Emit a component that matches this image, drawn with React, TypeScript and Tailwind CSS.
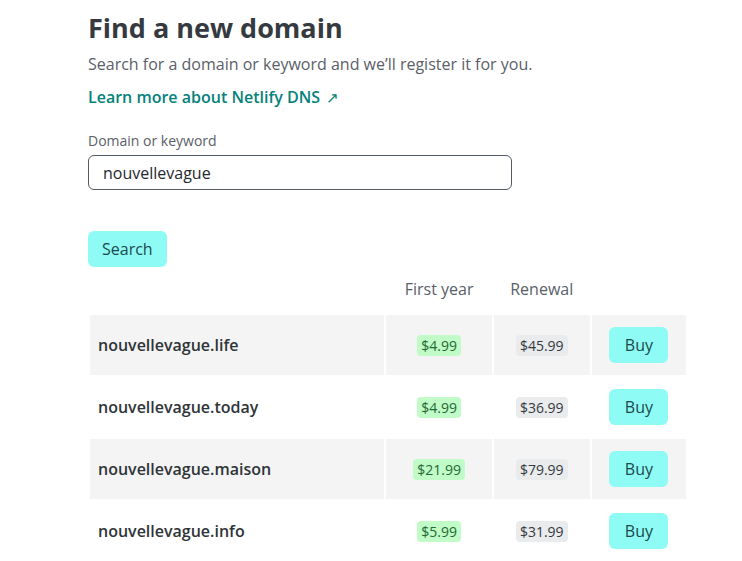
const rows = [
  { name: "nouvellevague.life", first: "$4.99", renewal: "$45.99" },
  { name: "nouvellevague.today", first: "$4.99", renewal: "$36.99" },
  { name: "nouvellevague.maison", first: "$21.99", renewal: "$79.99" },
  { name: "nouvellevague.info", first: "$5.99", renewal: "$31.99" },
];

export default function App() {
  return (
    <div className="min-h-screen bg-white font-['Open_Sans',sans-serif] text-[#343a40]">
      <main className="pl-[88px] pt-[10px] w-[690px]">
        <h1 className="text-[27px] font-bold leading-[36px]">Find a new domain</h1>
        <p className="mt-[6px] text-[16px] leading-[24px] text-[#5a6068]">
          Search for a domain or keyword and we’ll register it for you.
        </p>
        <a href="#" className="mt-[9px] inline-flex items-center gap-[6px] text-[16px] font-semibold text-[#04827b]">
          Learn more about Netlify DNS
          <span className="text-[15px] font-normal">↗</span>
        </a>

        {/* SEARCH FORM */}
        <div className="mt-[22px]">
          <label className="block text-[14px] leading-[20px] text-[#5a6068]">Domain or keyword</label>
          <input
            className="mt-[4px] w-[424px] h-[35px] border border-[#545b63] rounded-[6px] px-[14px] text-[16px] text-[#24292e] outline-none"
            defaultValue="nouvellevague"
          />
        </div>
        <button className="mt-[41px] h-[36px] px-[14px] rounded-[6px] bg-[#8ffbf5] text-[16px] text-[#1b4a4c]">
          Search
        </button>

        {/* RESULTS */}
        <table className="mt-[6px] border-separate border-spacing-[2px] w-[600px]">
          <thead>
            <tr className="h-[38px]">
              <th className="w-[294px]" />
              <th className="w-[105px] align-top pt-[2px] font-normal text-[16px] leading-[24px] text-[#5a6068]">First year</th>
              <th className="w-[96px] align-top pt-[2px] font-normal text-[16px] leading-[24px] text-[#5a6068]">Renewal</th>
              <th className="w-[94px]" />
            </tr>
          </thead>
          <tbody>
            {rows.map((r, i) => {
              const bg = i % 2 === 0 ? "bg-[#f4f4f4]" : "bg-white";
              return (
                <tr key={r.name} className="h-[60px]">
                  <td className={`${bg} pl-[8px] text-[16px] font-semibold text-[#2f3438]`}>{r.name}</td>
                  <td className={`${bg} text-center`}>
                    <span className="rounded-[4px] bg-[#c1fbc8] px-[4px] py-[1px] text-[14px] text-[#216a32]">{r.first}</span>
                  </td>
                  <td className={`${bg} text-center`}>
                    <span className="rounded-[4px] bg-[#e9ebed] px-[4px] py-[1px] text-[14px] text-[#343a40]">{r.renewal}</span>
                  </td>
                  <td className={`${bg} text-center`}>
                    <button className="h-[36px] w-[59px] rounded-[6px] bg-[#8ffbf5] text-[16px] text-[#1b4a4c]">Buy</button>
                  </td>
                </tr>
              );
            })}
          </tbody>
        </table>
      </main>
    </div>
  );
}
